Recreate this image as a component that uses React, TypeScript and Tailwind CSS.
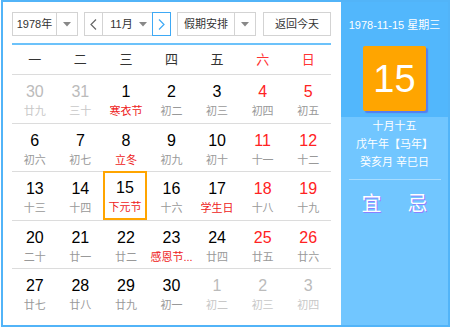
import React from "react";

type Day = { n: number; l: string; o?: boolean; f?: boolean; s?: boolean };

const rows: Day[][] = [
  [
    { n: 30, l: "廿九", o: true },
    { n: 31, l: "三十", o: true },
    { n: 1, l: "寒衣节", f: true },
    { n: 2, l: "初二" },
    { n: 3, l: "初三" },
    { n: 4, l: "初四" },
    { n: 5, l: "初五" },
  ],
  [
    { n: 6, l: "初六" },
    { n: 7, l: "初七" },
    { n: 8, l: "立冬", f: true },
    { n: 9, l: "初九" },
    { n: 10, l: "初十" },
    { n: 11, l: "十一" },
    { n: 12, l: "十二" },
  ],
  [
    { n: 13, l: "十三" },
    { n: 14, l: "十四" },
    { n: 15, l: "下元节", f: true, s: true },
    { n: 16, l: "十六" },
    { n: 17, l: "学生日", f: true },
    { n: 18, l: "十八" },
    { n: 19, l: "十九" },
  ],
  [
    { n: 20, l: "二十" },
    { n: 21, l: "廿一" },
    { n: 22, l: "廿二" },
    { n: 23, l: "感恩节...", f: true },
    { n: 24, l: "廿四" },
    { n: 25, l: "廿五" },
    { n: 26, l: "廿六" },
  ],
  [
    { n: 27, l: "廿七" },
    { n: 28, l: "廿八" },
    { n: 29, l: "廿九" },
    { n: 30, l: "初一" },
    { n: 1, l: "初二", o: true },
    { n: 2, l: "初三", o: true },
    { n: 3, l: "初四", o: true },
  ],
];

const weekdays = ["一", "二", "三", "四", "五", "六", "日"];

const font = { fontFamily: '"Liberation Sans", "Noto Sans CJK SC", sans-serif' };

function Caret() {
  return (
    <svg width="8" height="5" viewBox="0 0 8 5">
      <path d="M0 0 L8 0 L4 4.5 Z" fill="#888" />
    </svg>
  );
}

function Chevron({ dir, color }: { dir: "l" | "r"; color: string }) {
  return (
    <svg width="7" height="11" viewBox="0 0 7 11">
      <polyline
        points={dir === "l" ? "6,0.5 1,5.5 6,10.5" : "1,0.5 6,5.5 1,10.5"}
        fill="none"
        stroke={color}
        strokeWidth="1.2"
      />
    </svg>
  );
}

export default function App() {
  return (
    <div style={font} className="ml-[1px] w-[449px] h-[327px] border-2 border-[#52b4f8] flex bg-white">
      {/* Left panel */}
      <div className="w-[338px] pl-[9px] pr-[10px] pt-[10px] flex flex-col">
        {/* Toolbar */}
        <div className="flex h-[24px] text-[11px] text-[#333]">
          <div className="w-[66px] flex border border-[#d3d3d3]">
            <div className="flex-1 flex items-center justify-center border-r border-[#d3d3d3]">1978年</div>
            <div className="w-[20px] flex items-center justify-center"><Caret /></div>
          </div>
          <div className="ml-[6px] w-[87px] flex border border-[#d3d3d3]">
            <div className="w-[18px] flex items-center justify-center border-r border-[#d3d3d3]"><Chevron dir="l" color="#666" /></div>
            <div className="flex-1 flex items-center justify-center gap-[6px] pl-[2px]">
              <span>11月</span>
              <Caret />
            </div>
            <div className="w-[19px] -my-px -mr-px flex items-center justify-center border border-[#3ea9f5]"><Chevron dir="r" color="#3ea9f5" /></div>
          </div>
          <div className="ml-[6px] w-[79px] flex border border-[#d3d3d3]">
            <div className="flex-1 flex items-center justify-center border-r border-[#d3d3d3]">假期安排</div>
            <div className="w-[20px] flex items-center justify-center"><Caret /></div>
          </div>
          <div className="ml-[7px] w-[68px] flex items-center justify-center border border-[#d3d3d3]">返回今天</div>
        </div>
        <div className="mt-[7px] h-[2px] bg-[#6cc2fa]" />
        {/* Weekday header */}
        <div className="grid grid-cols-7 h-[30px] border-b border-[#dcdcdc] text-[13px]">
          {weekdays.map((w, i) => (
            <div key={w} className={`flex items-center justify-center ${i >= 5 ? "text-[#ff3333]" : "text-[#333]"}`}>{w}</div>
          ))}
        </div>
        {/* Days */}
        {rows.map((row, ri) => (
          <div key={ri} className={`grid grid-cols-7 h-[48.5px] ${ri < rows.length - 1 ? "border-b border-[#dcdcdc]" : ""}`}>
            {row.map((d, ci) => {
              const weekend = ci >= 5;
              const numColor = d.o ? "text-[#bbbbbb]" : weekend ? "text-[#ff2222]" : "text-[#000]";
              const lunColor = d.o ? "text-[#c8c8c8]" : d.f ? "text-[#ee2222]" : "text-[#999]";
              return (
                <div
                  key={ci}
                  className={`flex flex-col items-center ${d.s ? "border-2 border-[#ffa500] pt-[6px] mr-[2px] -mt-px" : "pt-[8px]"}`}
                >
                  <div className={`text-[16px] leading-[18px] ${numColor}`}>{d.n}</div>
                  <div className={`mt-[2px] text-[11px] leading-[16px] whitespace-nowrap ${lunColor}`}>{d.l}</div>
                </div>
              );
            })}
          </div>
        ))}
      </div>
      {/* Right panel */}
      <div className="flex-1 flex flex-col text-white">
        <div className="bg-[#52b7fc] pt-[15px] pb-[6px] flex flex-col items-center">
          <div className="text-[11px] leading-[16px]">1978-11-15 星期三</div>
          <div className="mt-[13px] w-[63px] h-[65px] bg-[#ffa500] rounded-[2px] shadow-[2px_2px_1px_rgba(90,80,230,0.55)] flex items-center justify-center text-[38px] leading-none">
            15
          </div>
        </div>
        <div className="flex-1 bg-[#71c6ff] flex flex-col items-center">
          <div className="text-[11px] leading-[18px] text-center">
            <div>十月十五</div>
            <div>戊午年【马年】</div>
            <div>癸亥月 辛巳日</div>
          </div>
          <div className="mt-[8px] w-[92px] h-px bg-[#a8dcff]" />
          <div className="mt-[12px] flex gap-[26px] text-[20px] leading-[24px] [text-shadow:1px_1px_0_#8a80ff]">
            <span>宜</span>
            <span>忌</span>
          </div>
        </div>
      </div>
    </div>
  );
}
